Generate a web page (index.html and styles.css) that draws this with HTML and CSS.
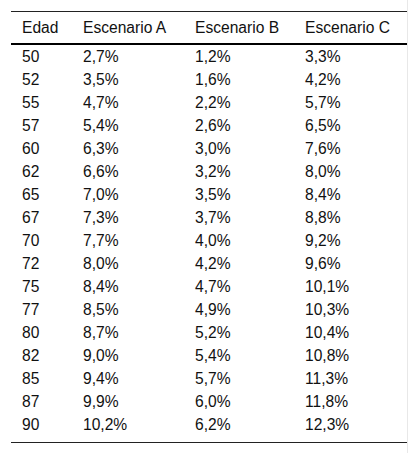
FILE: index.html
```html
<!DOCTYPE html>
<html>
<head>
<meta charset="utf-8">
<link rel="stylesheet" href="styles.css">
</head>
<body>
<div class="wrap">
<table class="tbl">
<colgroup><col class="c1"><col class="c2"><col class="c3"><col class="c4"></colgroup>
<thead>
<tr><th>Edad</th><th>Escenario A</th><th>Escenario B</th><th>Escenario C</th></tr>
</thead>
<tbody>
<tr><td>50</td><td>2,7%</td><td>1,2%</td><td>3,3%</td></tr>
<tr><td>52</td><td>3,5%</td><td>1,6%</td><td>4,2%</td></tr>
<tr><td>55</td><td>4,7%</td><td>2,2%</td><td>5,7%</td></tr>
<tr><td>57</td><td>5,4%</td><td>2,6%</td><td>6,5%</td></tr>
<tr><td>60</td><td>6,3%</td><td>3,0%</td><td>7,6%</td></tr>
<tr><td>62</td><td>6,6%</td><td>3,2%</td><td>8,0%</td></tr>
<tr><td>65</td><td>7,0%</td><td>3,5%</td><td>8,4%</td></tr>
<tr><td>67</td><td>7,3%</td><td>3,7%</td><td>8,8%</td></tr>
<tr><td>70</td><td>7,7%</td><td>4,0%</td><td>9,2%</td></tr>
<tr><td>72</td><td>8,0%</td><td>4,2%</td><td>9,6%</td></tr>
<tr><td>75</td><td>8,4%</td><td>4,7%</td><td>10,1%</td></tr>
<tr><td>77</td><td>8,5%</td><td>4,9%</td><td>10,3%</td></tr>
<tr><td>80</td><td>8,7%</td><td>5,2%</td><td>10,4%</td></tr>
<tr><td>82</td><td>9,0%</td><td>5,4%</td><td>10,8%</td></tr>
<tr><td>85</td><td>9,4%</td><td>5,7%</td><td>11,3%</td></tr>
<tr><td>87</td><td>9,9%</td><td>6,0%</td><td>11,8%</td></tr>
<tr class="last"><td>90</td><td>10,2%</td><td>6,2%</td><td>12,3%</td></tr>
</tbody>
</table>
</div>
</body>
</html>
```

FILE: styles.css
```css
html, body {
  margin: 0;
  padding: 0;
  background: #fff;
}
.wrap {
  width: 408px;
  border-right: 1px solid #e8e8e8;
  padding: 11px 0 11px 11px;
  box-sizing: border-box;
}
.tbl {
  width: 396px;
  border-collapse: collapse;
  table-layout: fixed;
  font-family: "Liberation Sans", Arial, sans-serif;
  font-size: 15.6px;
  color: #111;
  border-top: 1px solid #222;
  border-bottom: 1px solid #222;
}
.c1 { width: 61px; }
.c2 { width: 112px; }
.c3 { width: 110px; }
.c4 { width: 113px; }
.tbl th {
  font-weight: normal;
  text-align: left;
  padding: 0 0 0 11px;
  height: 31px;
  border-bottom: 2px solid #000;
  vertical-align: middle;
}
.tbl td {
  padding: 0 0 0 11px;
  height: 23px;
  line-height: 18px;
  vertical-align: middle;
}
.tbl tr.last td {
  height: 26px;
  vertical-align: top;
  padding-top: 3px;
}
```
